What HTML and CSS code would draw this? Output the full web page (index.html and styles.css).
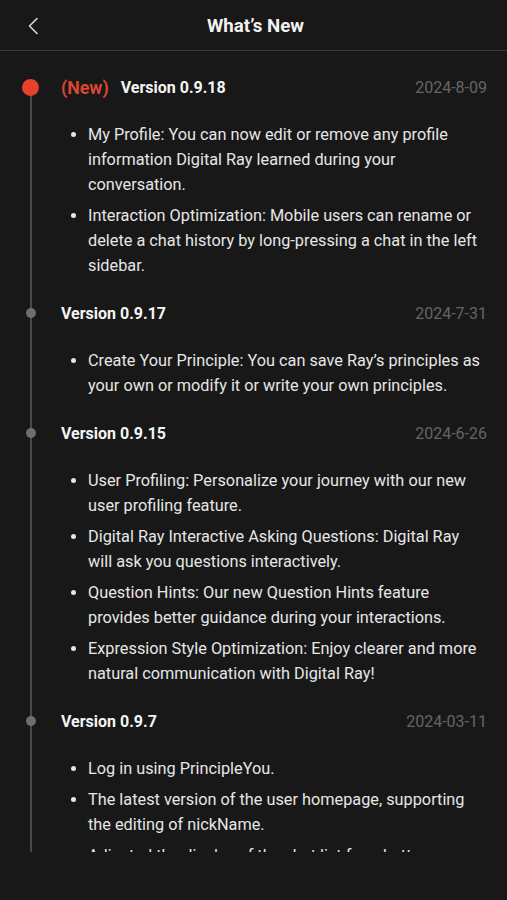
FILE: index.html
```html
<!DOCTYPE html>
<html lang="en">
<head>
<meta charset="utf-8">
<title>What's New</title>
<link rel="stylesheet" href="styles.css">
</head>
<body>
<div class="app">
  <header class="topbar">
    <button class="back" aria-label="Back">
      <svg width="12" height="18" viewBox="0 0 12 18"><path d="M10 1.5 L2.5 9 L10 16.5" fill="none" stroke="#d8d8d8" stroke-width="1.6" stroke-linecap="round" stroke-linejoin="round"/></svg>
    </button>
    <h1 class="title">What’s New</h1>
  </header>
  <main class="scroller">
    <div class="timeline">
      <section class="release current">
        <div class="rhead">
          <span class="badge">(New)</span>
          <span class="ver">Version 0.9.18</span>
          <span class="date">2024-8-09</span>
        </div>
        <ul class="notes">
          <li>My Profile: You can now edit or remove any profile information Digital Ray learned during your conversation.</li>
          <li>Interaction Optimization: Mobile users can rename or delete a chat history by long-pressing a chat in the left sidebar.</li>
        </ul>
      </section>
      <section class="release">
        <div class="rhead">
          <span class="ver">Version 0.9.17</span>
          <span class="date">2024-7-31</span>
        </div>
        <ul class="notes">
          <li>Create Your Principle: You can save Ray’s principles as your own or modify it or write your own principles.</li>
        </ul>
      </section>
      <section class="release">
        <div class="rhead">
          <span class="ver">Version 0.9.15</span>
          <span class="date">2024-6-26</span>
        </div>
        <ul class="notes">
          <li>User Profiling: Personalize your journey with our new user profiling feature.</li>
          <li>Digital Ray Interactive Asking Questions: Digital Ray will ask you questions interactively.</li>
          <li>Question Hints: Our new Question Hints feature provides better guidance during your interactions.</li>
          <li>Expression Style Optimization: Enjoy clearer and more natural communication with Digital Ray!</li>
        </ul>
      </section>
      <section class="release">
        <div class="rhead">
          <span class="ver">Version 0.9.7</span>
          <span class="date">2024-03-11</span>
        </div>
        <ul class="notes">
          <li>Log in using PrincipleYou.</li>
          <li>The latest version of the user homepage, supporting the editing of nickName.</li>
          <li>Adjusted the display of the chat list for a better experience.</li>
        </ul>
      </section>
    </div>
  </main>
</div>
</body>
</html>
```
FILE: styles.css
```css
* { box-sizing: border-box; }
html, body { margin: 0; padding: 0; background: #181818; }
body {
  font-family: Roboto, "Liberation Sans", Arial, sans-serif;
  color: #ececec;
  height: 900px;
  overflow: hidden;
}
.app { display: flex; flex-direction: column; height: 900px; }
.topbar {
  height: 51px;
  flex: none;
  display: flex;
  align-items: center;
  justify-content: center;
  position: relative;
  border-bottom: 1px solid #3a3a3a;
}
.back {
  position: absolute;
  left: 24px;
  top: 16px;
  width: 18px;
  height: 20px;
  padding: 0;
  border: 0;
  background: none;
  display: flex;
  align-items: center;
  justify-content: center;
}
.title {
  margin: 0;
  font-size: 18.7px;
  font-weight: 700;
  color: #f2f2f2;
  line-height: 24px;
  padding-top: 1px;
  padding-left: 4px;
}
.scroller {
  height: 801px;
  flex: none;
  overflow: hidden;
}
.timeline {
  position: relative;
  padding: 24px 22px 0 61px;
}
.timeline::before {
  content: "";
  position: absolute;
  left: 30px;
  top: 37px;
  bottom: -200px;
  width: 2px;
  background: #4a4a4a;
}
.release { position: relative; padding-bottom: 23px; }
.rhead {
  display: flex;
  align-items: center;
  height: 25px;
  line-height: 25px;
  position: relative;
  margin-right: -2px;
}
.rhead::before {
  content: "";
  position: absolute;
  left: -35px;
  top: 7px;
  width: 10px;
  height: 10px;
  border-radius: 50%;
  background: #6e6e6e;
}
.current .rhead::before {
  left: -39px;
  top: 4px;
  width: 17px;
  height: 17px;
  background: #e5412b;
}
.badge {
  color: #dc4530;
  font-weight: 700;
  font-size: 17.8px;
  margin-right: 12px;
}
.ver {
  font-weight: 700;
  font-size: 16px;
  color: #f4f4f4;
}
.date {
  margin-left: auto;
  font-size: 16px;
  color: #656565;
}
.notes {
  list-style: none;
  margin: 22px 0 0;
  padding: 0;
  display: flex;
  flex-direction: column;
  gap: 6px;
}
.notes li {
  display: flex;
  align-items: flex-start;
  font-size: 16.3px;
  line-height: 25px;
  color: #e6e6e6;
  padding-left: 27px;
  position: relative;
}
.notes li::before {
  content: "";
  position: absolute;
  left: 10px;
  top: 10px;
  width: 5px;
  height: 5px;
  border-radius: 50%;
  background: #e6e6e6;
}
```
